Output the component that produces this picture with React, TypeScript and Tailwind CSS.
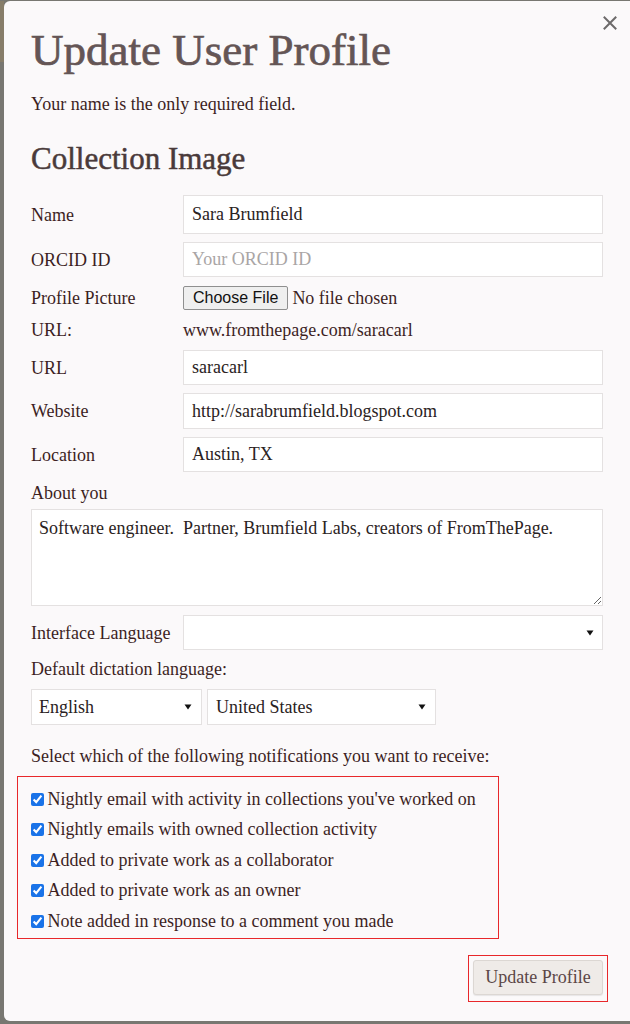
import React from "react";

function Caret() {
  return (
    <svg width="8" height="6" viewBox="0 0 8 6" className="shrink-0">
      <path d="M0.5 0.5 L7.5 0.5 L4 5.5 Z" fill="#111" />
    </svg>
  );
}

function Row({
  label,
  h,
  mt,
  children,
}: {
  label: string;
  h: string;
  mt: string;
  children: React.ReactNode;
}) {
  return (
    <div className={`flex items-center ${h} ${mt}`}>
      <div className="w-[152px] shrink-0 text-[18px] leading-[24px] text-[#3d1f1f]">{label}</div>
      <div className="flex h-full flex-1 items-center">{children}</div>
    </div>
  );
}

const inputCls =
  "h-full w-full border border-[#e4e1e1] bg-white px-[8px] text-[18px] text-[#2a2222] outline-none placeholder:text-[#a9a5a5] font-['Liberation_Serif',serif]";

const checks = [
  "Nightly email with activity in collections you've worked on",
  "Nightly emails with owned collection activity",
  "Added to private work as a collaborator",
  "Added to private work as an owner",
  "Note added in response to a comment you made",
];

export default function App() {
  return (
    <div className="flex h-[1024px] w-[630px] overflow-hidden bg-[#787771] pt-[1px] font-['Liberation_Serif',serif]">
      <div className="flex w-[4px] shrink-0 flex-col">
        <div className="h-[61px] bg-[#877d69]" />
      </div>
      <div className="relative h-[1020px] flex-1 rounded-l-[6px] bg-[#fbf9fa] px-[27px] pt-[24px]">
        <button className="absolute right-[13px] top-[15px] flex h-[14px] w-[14px] items-center justify-center">
          <svg width="14" height="14" viewBox="0 0 14 14">
            <path d="M1.5 1.5 L12.5 12.5 M12.5 1.5 L1.5 12.5" stroke="#6c6a6a" strokeWidth="2" strokeLinecap="square" />
          </svg>
        </button>

        <h1 className="text-[45px] leading-[50px] text-[#645555] [-webkit-text-stroke:0.7px_#645555]">Update User Profile</h1>
        <p className="mt-[17px] text-[18px] leading-[24px] text-[#3d1f1f]">Your name is the only required field.</p>
        <h2 className="mt-[25px] text-[31px] leading-[36px] text-[#4a3a3a] [-webkit-text-stroke:0.5px_#4a3a3a]">Collection Image</h2>

        <div className="mt-[18px] flex flex-col">
          <Row label="Name" h="h-[39px]" mt="mt-0">
            <input className={inputCls} defaultValue="Sara Brumfield" readOnly />
          </Row>
          <Row label="ORCID ID" h="h-[35px]" mt="mt-[8px]">
            <input className={inputCls} placeholder="Your ORCID ID" readOnly />
          </Row>
          <Row label="Profile Picture" h="h-[24px]" mt="mt-[9px]">
            <div className="flex h-full items-center">
              <div className="flex h-[24px] items-center rounded-[2px] border border-[#8f8f8f] bg-[#efefef] px-[9px] font-['Liberation_Sans',sans-serif] text-[16px] text-[#111]">
                Choose File
              </div>
              <span className="ml-[4px] text-[18px] text-[#3d1f1f]">No file chosen</span>
            </div>
          </Row>
          <Row label="URL:" h="h-[24px]" mt="mt-[8px]">
            <span className="text-[18px] text-[#3d1f1f]">www.fromthepage.com/saracarl</span>
          </Row>
          <Row label="URL" h="h-[35px]" mt="mt-[8px]">
            <input className={inputCls} defaultValue="saracarl" readOnly />
          </Row>
          <Row label="Website" h="h-[36px]" mt="mt-[8px]">
            <input className={inputCls} defaultValue="http://sarabrumfield.blogspot.com" readOnly />
          </Row>
          <Row label="Location" h="h-[35px]" mt="mt-[8px]">
            <input className={inputCls} defaultValue="Austin, TX" readOnly />
          </Row>

          <div className="mt-[9px] text-[18px] leading-[24px] text-[#3d1f1f]">About you</div>
          <textarea
            className="mt-[4px] h-[97px] w-full border border-[#e4e1e1] bg-white px-[7px] py-[6px] text-[18px] leading-[24px] text-[#2a2222] outline-none font-['Liberation_Serif',serif]"
            defaultValue="Software engineer.  Partner, Brumfield Labs, creators of FromThePage."
            readOnly
          />

          <Row label="Interface Language" h="h-[35px]" mt="mt-[9px]">
            <div className="flex h-full w-full items-center justify-end border border-[#e4e1e1] bg-white pr-[8px]">
              <Caret />
            </div>
          </Row>

          <div className="mt-[7px] text-[18px] leading-[24px] text-[#3d1f1f]">Default dictation language:</div>
          <div className="mt-[8px] flex h-[36px] gap-[5px]">
            <div className="flex w-[171px] items-center justify-between border border-[#e4e1e1] bg-white pl-[7px] pr-[9px] text-[18px] text-[#2a2222]">
              <span>English</span>
              <Caret />
            </div>
            <div className="flex w-[229px] items-center justify-between border border-[#e4e1e1] bg-white pl-[8px] pr-[9px] text-[18px] text-[#2a2222]">
              <span>United States</span>
              <Caret />
            </div>
          </div>

          <div className="mt-[19px] text-[18px] leading-[24px] text-[#3d1f1f]">
            Select which of the following notifications you want to receive:
          </div>

          <div className="-ml-[14px] mt-[8px] flex w-[482px] flex-col gap-[6.5px] border-[1.5px] border-[#e8282b] pb-[5px] pl-[12.5px] pt-[10px]">
            {checks.map((c) => (
              <label key={c} className="flex h-[24px] items-center text-[18px] text-[#3d1f1f]">
                <input type="checkbox" defaultChecked className="m-0 mr-[4px] h-[13px] w-[13px] accent-[#1a73e8]" />
                <span>{c}</span>
              </label>
            ))}
          </div>

          <div className="mt-[16px] flex justify-end">
            <div className="-mr-[5px] border-[1.5px] border-[#e8282b] p-[4px] pb-[5.5px]">
              <button className="flex h-[35px] w-[130px] items-center justify-center rounded-[3px] border border-[#dcd7d3] bg-[#efebe8] text-[18px] text-[#5b4646] shadow-[0_1px_1px_rgba(0,0,0,0.08)] font-['Liberation_Serif',serif]">
                Update Profile
              </button>
            </div>
          </div>
        </div>
      </div>
    </div>
  );
}
